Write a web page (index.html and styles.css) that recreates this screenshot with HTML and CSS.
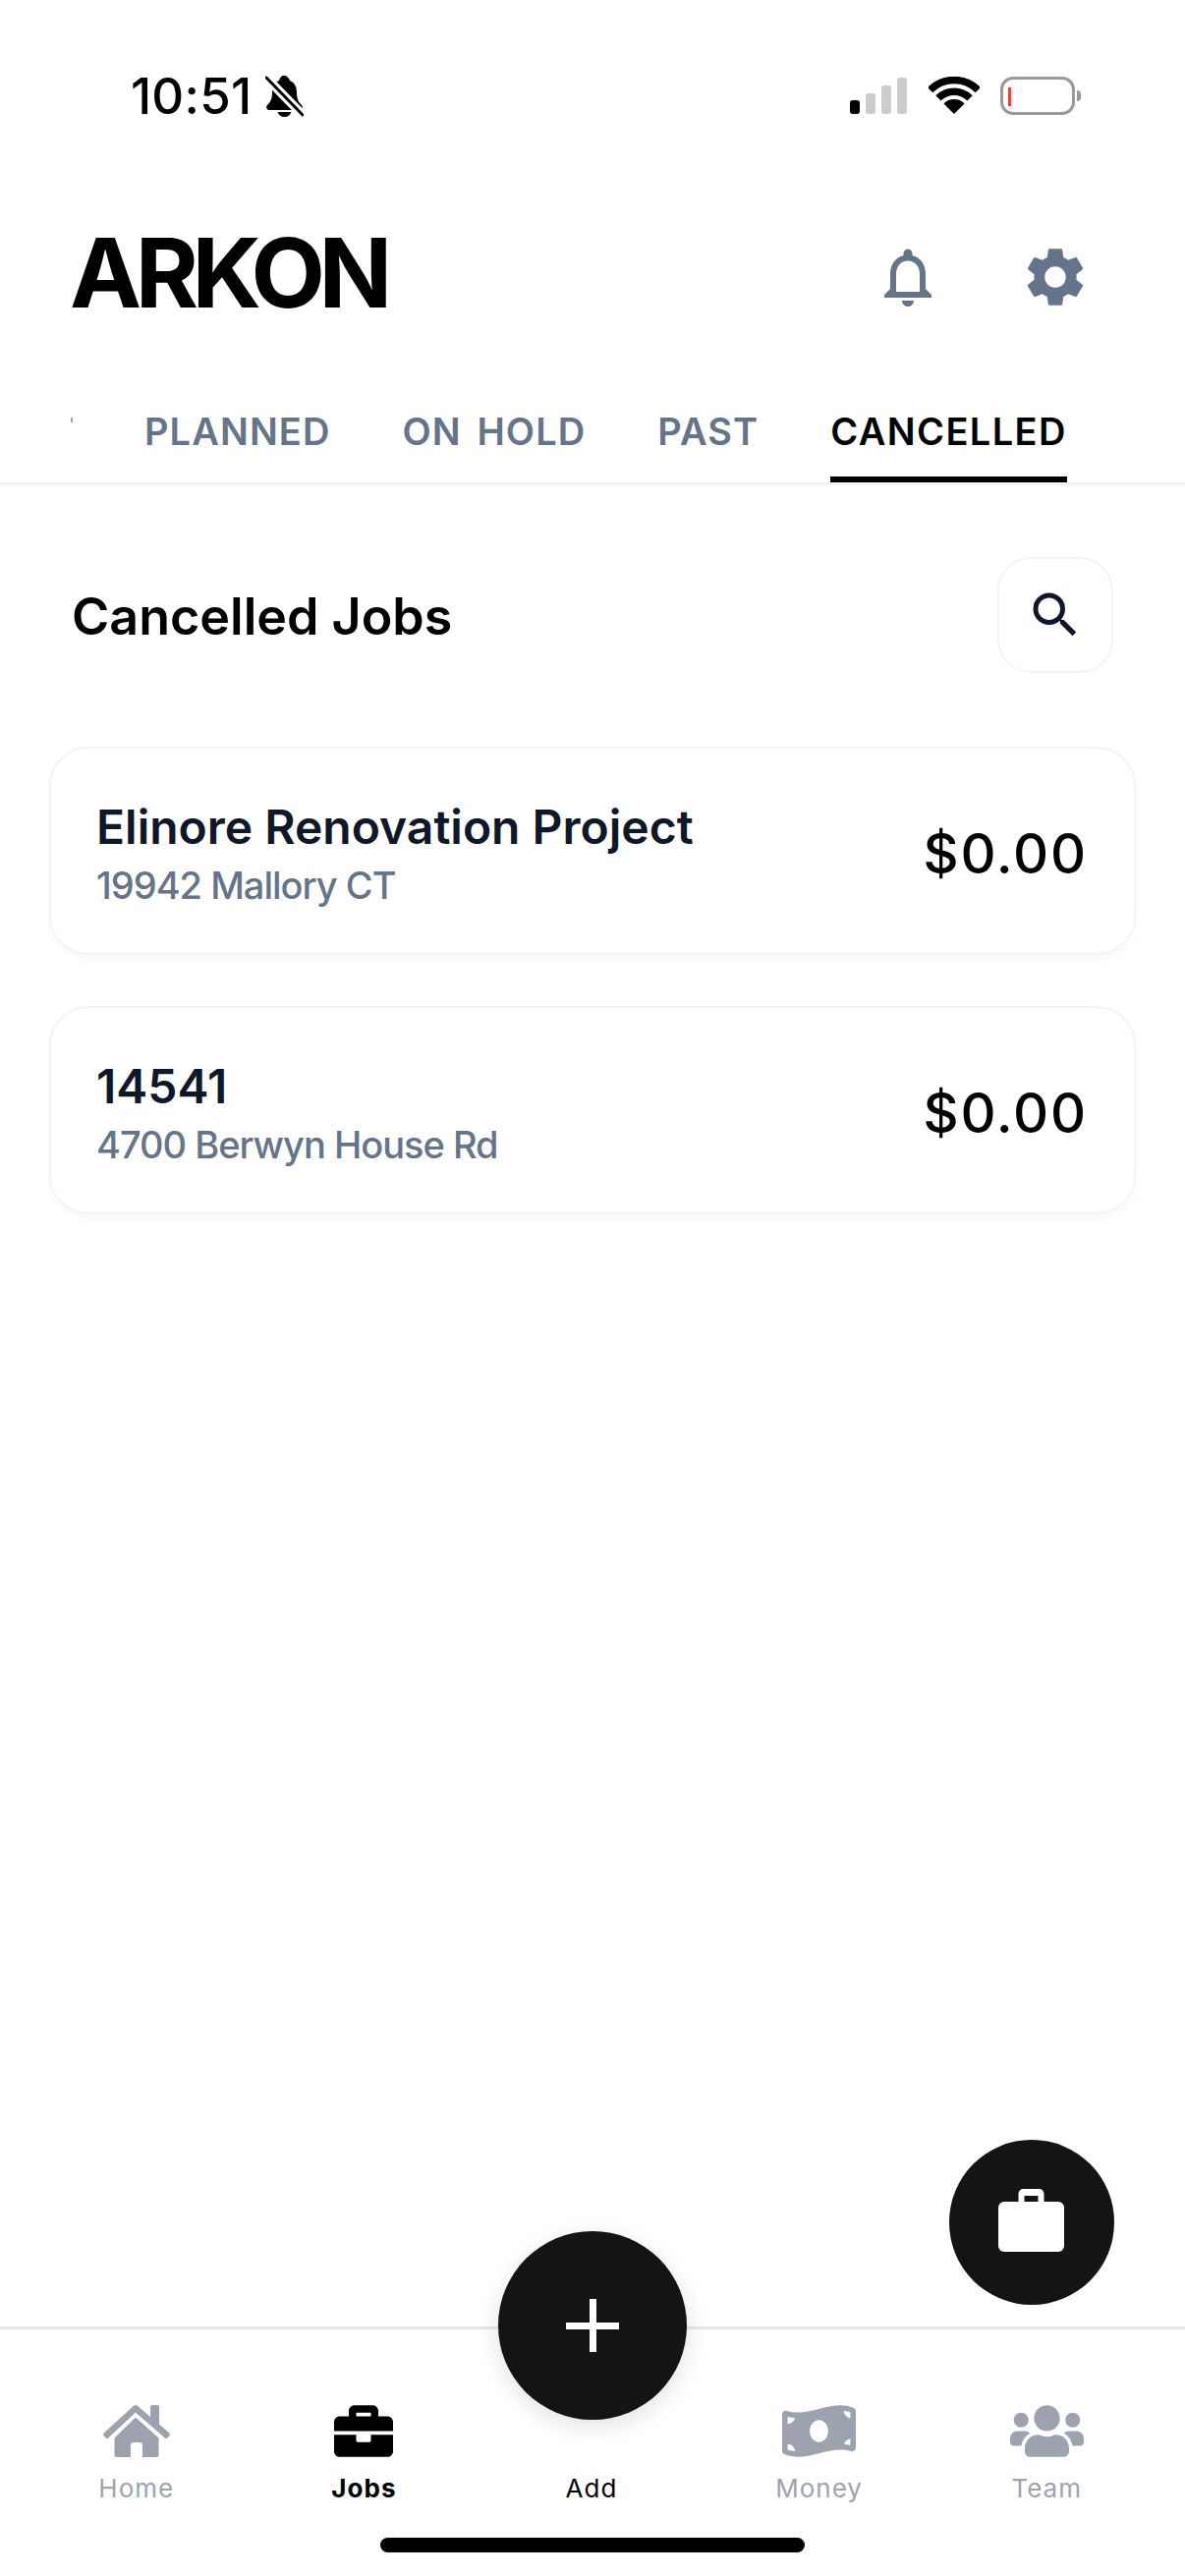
FILE: index.html
```html
<!DOCTYPE html>
<html>
<head>
  <title>Arkon Jobs</title>
  <link rel="stylesheet" href="styles.css">
</head>
<body>
  <div class="screen">
    <!-- Status bar -->
    <div class="status-bar">
      <div class="status-left">
        <span class="clock">10:51</span>
        <svg class="muted-bell" viewBox="0 0 39 42">
          <path d="M19 0c3 0 5 2 6 5 5 2 7 7 7 12 0 7 2 10 5 13 1.500 1.500 1 5-2 5H4c-3 0-3.500-3.500-2-5 3-3 5-6 5-13 0-5 2-10 7-12 1-3 2-5 5-5z"/>
          <path d="M12.500 37h14c-1 3-3.500 5-7 5s-6-2-7-5z"/>
          <path class="slash-gap" d="M1 2l37 38"/>
          <path class="slash-line" d="M1 2l37 38"/>
        </svg>
      </div>
      <div class="status-right">
        <div class="signal">
          <span class="bar bar-1"></span>
          <span class="bar bar-2"></span>
          <span class="bar bar-3"></span>
          <span class="bar bar-4"></span>
        </div>
        <svg class="wifi" viewBox="0 0 52 38">
          <path class="wifi-arc" d="M1.600 13.600a34.500 34.500 0 0 1 48.800 0"/>
          <path class="wifi-arc" d="M9.900 21.900a22.750 22.750 0 0 1 32.200 0"/>
          <path d="M26 38L15.400 27.400a15 15 0 0 1 21.200 0z"/>
        </svg>
        <div class="battery">
          <div class="battery-body"><span class="battery-level"></span></div>
          <span class="battery-nub"></span>
        </div>
      </div>
    </div>

    <!-- Header -->
    <div class="app-header">
      <div class="logo">ARKON</div>
      <div class="header-icons">
        <svg class="header-icon" viewBox="0 0 24 24"><path d="M12 22c1.100 0 2-.9 2-2h-4c0 1.100.9 2 2 2zm6-6v-5c0-3.070-1.630-5.640-4.500-6.320V4c0-.83-.67-1.500-1.500-1.500s-1.500.67-1.500 1.500v.68C7.640 5.360 6 7.920 6 11v5l-2 2v1h16v-1l-2-2zm-2 1H8v-6c0-2.480 1.510-4.500 4-4.500s4 2.020 4 4.500v6z"/></svg>
        <svg class="header-icon" viewBox="0 0 24 24"><path d="M19.140 12.940c.04-.3.06-.61.06-.94 0-.32-.02-.64-.07-.94l2.030-1.580a.49.49 0 0 0 .12-.61l-1.920-3.320a.488.488 0 0 0-.59-.22l-2.390.96c-.5-.38-1.030-.7-1.620-.94l-.36-2.540a.484.484 0 0 0-.48-.41h-3.840c-.24 0-.43.17-.47.41l-.36 2.540c-.59.24-1.130.57-1.620.94l-2.390-.96c-.22-.08-.47 0-.59.22L2.740 8.870c-.12.21-.08.47.12.61l2.030 1.580c-.05.3-.09.63-.09.94s.02.64.07.94l-2.030 1.580a.49.49 0 0 0-.12.61l1.920 3.320c.12.22.37.29.59.22l2.390-.96c.5.38 1.030.7 1.620.94l.36 2.540c.05.24.24.41.48.41h3.840c.24 0 .44-.17.47-.41l.36-2.540c.59-.24 1.130-.56 1.620-.94l2.390.96c.22.08.47 0 .59-.22l1.920-3.320c.12-.22.07-.47-.12-.61l-2.010-1.580zM12 15.600c-1.980 0-3.600-1.620-3.600-3.600s1.620-3.600 3.600-3.600 3.600 1.620 3.600 3.600-1.620 3.600-3.600 3.600z"/></svg>
      </div>
    </div>

    <!-- Tabs -->
    <div class="tabs">
      <span class="tab-sliver"></span>
      <div class="tab">PLANNED</div>
      <div class="tab">ON HOLD</div>
      <div class="tab">PAST</div>
      <div class="tab tab-active">CANCELLED</div>
    </div>

    <!-- Job list -->
    <div class="content">
      <div class="section-head">
        <h1 class="section-title">Cancelled Jobs</h1>
        <div class="search-button">
          <svg class="search-icon" viewBox="0 0 24 24"><path d="M15.500 14h-.79l-.28-.27A6.471 6.471 0 0 0 16 9.500 6.500 6.500 0 1 0 9.500 16c1.610 0 3.090-.59 4.230-1.570l.27.28v.79l5 4.990L20.490 19l-4.990-5zm-6 0C7.010 14 5 11.990 5 9.500S7.010 5 9.500 5 14 7.010 14 9.500 11.990 14 9.500 14z"/></svg>
        </div>
      </div>

      <div class="job-card">
        <div class="job-info">
          <div class="job-name">Elinore Renovation Project</div>
          <div class="job-address">19942 Mallory CT</div>
        </div>
        <div class="job-amount">$0.00</div>
      </div>

      <div class="job-card">
        <div class="job-info">
          <div class="job-name">14541</div>
          <div class="job-address">4700 Berwyn House Rd</div>
        </div>
        <div class="job-amount">$0.00</div>
      </div>
    </div>

    <!-- Floating buttons -->
    <div class="fab fab-jobs">
      <svg class="fab-case" viewBox="0 0 67 64">
        <path d="M20.500 13V5a5 5 0 0 1 5-5h16a5 5 0 0 1 5 5v8h-6V7h-14v6z"/>
        <rect y="13" width="67" height="51" rx="6"/>
      </svg>
    </div>
    <div class="fab fab-add">
      <span class="plus-h"></span>
      <span class="plus-v"></span>
    </div>

    <!-- Bottom nav -->
    <div class="bottom-nav">
      <div class="nav-item">
        <svg class="nav-icon icon-home" viewBox="0 0 68 53">
          <path d="M30.800 1a3.500 3.500 0 0 1 4.400 0L48 12V2a2 2 0 0 1 2-2h5a2 2 0 0 1 2 2v17.500L67.300 28.500a2 2 0 0 1 .2 2.600l-2 2.300a2 2 0 0 1-2.700.2L33 7.500 5.200 33.600a2 2 0 0 1-2.700-.2l-2-2.300a2 2 0 0 1 .2-2.600z"/>
          <path d="M33 12.500l23.500 21V51a2 2 0 0 1-2 2H40V41a3 3 0 0 0-3-3h-6a3 3 0 0 0-3 3v12H13.500a2 2 0 0 1-2-2V33.500z"/>
        </svg>
        <span class="nav-label">Home</span>
      </div>
      <div class="nav-item nav-active">
        <svg class="nav-icon icon-jobs" viewBox="0 32 512 448"><path d="M320 336c0 8.840-7.160 16-16 16h-96c-8.840 0-16-7.160-16-16v-48H0v144c0 25.600 22.400 48 48 48h416c25.600 0 48-22.400 48-48V288H320v48zm144-208h-80V80c0-25.600-22.400-48-48-48H176c-25.600 0-48 22.400-48 48v48H48c-25.600 0-48 22.400-48 48v80h512v-80c0-25.600-22.400-48-48-48zm-144 0H192V96h128v32z"/></svg>
        <span class="nav-label">Jobs</span>
      </div>
      <div class="nav-item nav-add">
        <span class="nav-label">Add</span>
      </div>
      <div class="nav-item">
        <svg class="nav-icon icon-wide" viewBox="0 32 640 448"><path d="M621.160 54.460C582.370 38.190 543.550 32 504.750 32c-123.170-.01-246.330 62.340-369.500 62.340-30.890 0-61.760-3.920-92.650-13.720-3.470-1.100-6.950-1.620-10.350-1.620C15.040 79 0 92.320 0 110.810v317.260c0 12.630 7.230 24.600 18.840 29.460C57.630 473.810 96.450 480 135.250 480c123.170 0 246.340-62.350 369.510-62.350 30.890 0 61.760 3.920 92.650 13.720 3.470 1.100 6.950 1.620 10.350 1.620 17.210 0 32.250-13.320 32.250-31.810V83.930c-.01-12.640-7.240-24.600-18.850-29.470zM48 132.220c20.120 5.040 41.120 7.570 62.720 8.930C104.840 170.540 79 192.690 48 192.690v-60.470zm0 285v-47.780c34.370 0 62.180 27.270 63.710 61.400-22.530-1.810-43.590-6.310-63.710-13.620zM320 352c-44.190 0-80-42.990-80-96 0-53.020 35.820-96 80-96s80 42.980 80 96c0 53.030-35.830 96-80 96zm272 27.780c-17.520-4.390-35.710-6.850-54.320-8.440 5.870-26.080 27.500-45.880 54.320-49.280v57.720zm0-236.110c-30.890-3.910-54.860-29.700-55.810-61.550 19.540 2.170 38.090 6.230 55.810 12.660v48.890z"/></svg>
        <span class="nav-label">Money</span>
      </div>
      <div class="nav-item">
        <svg class="nav-icon icon-wide" viewBox="0 32 640 448"><path d="M96 224c35.300 0 64-28.700 64-64s-28.700-64-64-64-64 28.700-64 64 28.700 64 64 64zm448 0c35.300 0 64-28.700 64-64s-28.700-64-64-64-64 28.700-64 64 28.700 64 64 64zm32 32h-64c-17.600 0-33.500 7.100-45.100 18.600 40.300 22.100 68.900 62 75.100 109.400h66c17.700 0 32-14.300 32-32v-32c0-35.300-28.700-64-64-64zm-256 0c61.900 0 112-50.100 112-112S381.900 32 320 32 208 82.100 208 144s50.100 112 112 112zm76.800 32h-8.300c-20.800 10-43.900 16-68.500 16s-47.600-6-68.500-16h-8.300C179.600 288 128 339.600 128 403.200V432c0 26.500 21.500 48 48 48h288c26.500 0 48-21.500 48-48v-28.800c0-63.600-51.600-115.200-115.200-115.200zm-223.700-13.400C161.500 263.100 145.600 256 128 256H64c-35.300 0-64 28.700-64 64v32c0 17.700 14.300 32 32 32h65.900c6.300-47.400 34.900-87.300 75.200-109.400z"/></svg>
        <span class="nav-label">Team</span>
      </div>
    </div>
    <div class="home-bar-wrap"><span class="home-bar"></span></div>
  </div>
</body>
</html>
```

FILE: styles.css
```css
* {
  box-sizing: border-box;
}

body {
  margin: 0;
  background: #fff;
  font-family: Inter, "Liberation Sans", sans-serif;
}

.screen {
  position: relative;
  width: 1206px;
  height: 2622px;
  display: flex;
  flex-direction: column;
  overflow: hidden;
  background: #fff;
}

/* Status bar */
.status-bar {
  height: 120px;
  padding: 77px 106px 0 133px;
  display: flex;
  justify-content: space-between;
  align-items: flex-start;
}

.status-left {
  display: flex;
  align-items: center;
  gap: 14px;
}

.clock {
  font-size: 51px;
  line-height: 42px;
  font-weight: 500;
  letter-spacing: 0.200px;
  color: #000;
}

.muted-bell {
  width: 39px;
  height: 42px;
}

.slash-gap {
  stroke: #fff;
  stroke-width: 9;
}

.slash-line {
  stroke: #000;
  stroke-width: 3;
  stroke-linecap: round;
}

.status-right {
  display: flex;
  align-items: flex-start;
}

.signal {
  display: flex;
  align-items: flex-end;
  gap: 6px;
  height: 37px;
  margin-top: 2px;
  margin-right: 22px;
}

.bar {
  width: 10px;
  border-radius: 3px;
  background: #ccc;
}

.bar-1 {
  height: 14px;
  background: #000;
}

.bar-2 {
  height: 21px;
}

.bar-3 {
  height: 29px;
}

.bar-4 {
  height: 37px;
}

.wifi {
  width: 52px;
  height: 38px;
  margin-top: 1px;
  margin-right: 21px;
}

.wifi-arc {
  fill: none;
  stroke: #000;
  stroke-width: 7.500;
}

.battery {
  display: flex;
  align-items: center;
  gap: 2px;
  height: 39px;
  margin-top: 1px;
}

.battery-body {
  width: 76px;
  height: 39px;
  padding: 8px 5px;
  border: 3px solid #999;
  border-radius: 13px;
}

.battery-level {
  display: block;
  width: 3px;
  height: 19px;
  background: #ff3b30;
}

.battery-nub {
  width: 4px;
  height: 11px;
  border-radius: 0 6px 6px 0;
  background: #999;
}

/* Header */
.app-header {
  margin-top: 126px;
  padding: 0 96px 0 71px;
  height: 72px;
  display: flex;
  justify-content: space-between;
  align-items: center;
}

.logo {
  font-size: 98px;
  font-weight: 700;
  line-height: 72px;
  letter-spacing: -6.500px;
  color: #000;
  margin-top: -8px;
}

.header-icons {
  display: flex;
  gap: 78px;
}

.header-icon {
  width: 72px;
  height: 72px;
  fill: #64748b;
}

/* Tabs */
.tabs {
  margin-top: 98px;
  height: 78px;
  padding-left: 72px;
  display: flex;
  border-bottom: 3px solid #f1f5f9;
}

.tab-sliver {
  width: 2px;
  height: 5px;
  margin-top: 9px;
  margin-right: 73px;
  background: #94a3b8;
}

.tab {
  height: 75px;
  margin-right: 73px;
  font-size: 38px;
  line-height: 46px;
  font-weight: 600;
  letter-spacing: 1.100px;
  word-spacing: 5px;
  white-space: nowrap;
  color: #64748b;
}

.tab-active {
  margin-right: 0;
  letter-spacing: 1.400px;
  color: #000;
  border-bottom: 6px solid #000;
}

/* Job list */
.content {
  flex: 1;
  padding: 73px 50px 0;
}

.section-head {
  padding: 0 23px;
  height: 118px;
  display: flex;
  justify-content: space-between;
  align-items: center;
}

.section-title {
  margin: 2px 0 0;
  font-size: 52px;
  font-weight: 600;
  color: #000;
}

.search-button {
  width: 118px;
  height: 118px;
  display: flex;
  align-items: center;
  justify-content: center;
  border: 2px solid #f1f5f9;
  border-radius: 34px;
  background: #fff;
}

.search-icon {
  width: 60px;
  height: 60px;
  fill: #0f172a;
}

.job-card {
  margin-top: 75px;
  height: 212px;
  padding: 6px 47px 0 46px;
  display: flex;
  justify-content: space-between;
  align-items: center;
  border: 2px solid #f1f5f9;
  border-radius: 40px;
  background: #fff;
  box-shadow: 0 4px 8px rgba(15, 23, 42, 0.03);
}

.job-card + .job-card {
  margin-top: 52px;
}

.job-name {
  font-size: 48px;
  line-height: 60px;
  font-weight: 600;
  color: #0f172a;
}

.job-address {
  margin-top: 4px;
  font-size: 38px;
  line-height: 50px;
  font-weight: 500;
  letter-spacing: -1px;
  color: #64748b;
}

.job-amount {
  font-size: 56px;
  font-weight: 500;
  letter-spacing: 1.800px;
  color: #000;
}

/* Floating buttons */
.fab {
  position: absolute;
  border-radius: 50%;
  background: #141414;
  display: flex;
  align-items: center;
  justify-content: center;
}

.fab-jobs {
  left: 966px;
  top: 2178px;
  width: 168px;
  height: 168px;
}

.fab-case {
  width: 67px;
  height: 64px;
  margin: 0 1px 4px 0;
  fill: #fff;
}

.fab-add {
  left: 507px;
  top: 2271px;
  width: 192px;
  height: 192px;
  z-index: 2;
  box-shadow: 0 6px 24px rgba(0, 0, 0, 0.12);
}

.plus-h {
  position: absolute;
  width: 54px;
  height: 7px;
  background: #fff;
}

.plus-v {
  position: absolute;
  width: 7px;
  height: 54px;
  background: #fff;
}

/* Bottom nav */
.bottom-nav {
  height: 202px;
  padding: 77px 25px 0 23px;
  display: grid;
  grid-template-columns: repeat(5, 1fr);
  border-top: 3px solid #e5e7eb;
}

.nav-item {
  display: flex;
  flex-direction: column;
  align-items: center;
  color: #9ca3af;
}

.nav-add {
  padding-top: 53px;
  color: #000;
}

.nav-active {
  color: #000;
}

.nav-icon {
  height: 53px;
  fill: #9ca3af;
}

.icon-home {
  width: 68px;
}

.icon-jobs {
  width: 60px;
  fill: #000;
}

.icon-wide {
  width: 75px;
}

.nav-label {
  margin-top: 14px;
  font-size: 26px;
  line-height: 36px;
  letter-spacing: 1px;
}

.nav-active .nav-label {
  font-weight: 700;
}

.nav-add .nav-label {
  font-weight: 400;
}

.home-bar-wrap {
  height: 52px;
  padding-top: 13px;
  display: flex;
  justify-content: center;
}

.home-bar {
  width: 432px;
  height: 15px;
  border-radius: 8px;
  background: #000;
}
```
